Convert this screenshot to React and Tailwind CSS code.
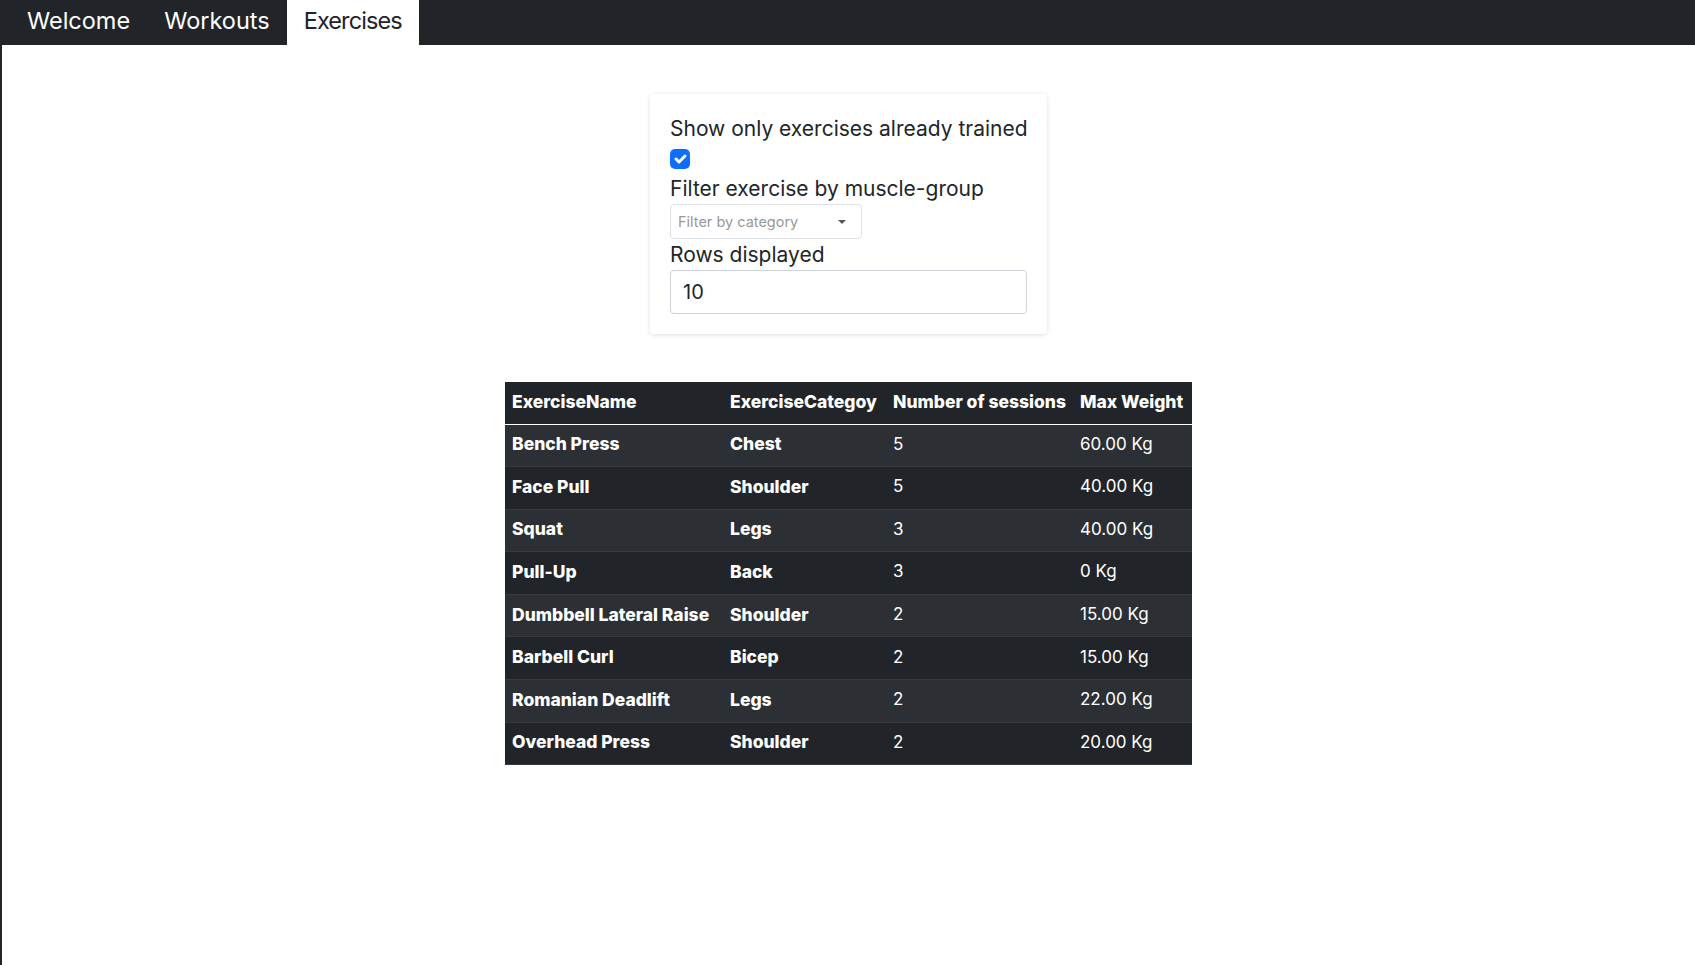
import { useState } from "react"

const rows = [
  { name: "Bench Press", category: "Chest", sessions: 5, weight: "60.00 Kg" },
  { name: "Face Pull", category: "Shoulder", sessions: 5, weight: "40.00 Kg" },
  { name: "Squat", category: "Legs", sessions: 3, weight: "40.00 Kg" },
  { name: "Pull-Up", category: "Back", sessions: 3, weight: "0 Kg" },
  { name: "Dumbbell Lateral Raise", category: "Shoulder", sessions: 2, weight: "15.00 Kg" },
  { name: "Barbell Curl", category: "Bicep", sessions: 2, weight: "15.00 Kg" },
  { name: "Romanian Deadlift", category: "Legs", sessions: 2, weight: "22.00 Kg" },
  { name: "Overhead Press", category: "Shoulder", sessions: 2, weight: "20.00 Kg" }
]

const tabs = ["Welcome", "Workouts", "Exercises"]

export default function App() {

  const [trained, setTrained] = useState(true)
  const [limit, setLimit] = useState("10")

  return (

    <div
      className="min-h-screen bg-white border-l-2 border-[#212529] text-[#212529]"
      style={{ fontFamily: "Inter, 'Noto Sans', sans-serif" }}
    >

      <nav className="flex h-[45px] bg-[#212529] pl-2">
        {tabs.map((tab) => (
          <div
            key={tab}
            className={
              tab === "Exercises"
                ? "px-[17px] leading-[41px] text-[23.5px] tracking-[-0.9px] bg-white text-[#212529]"
                : "px-[17px] leading-[41px] text-[23.5px] text-white"
            }
          >
            {tab}
          </div>
        ))}
      </nav>

      <div className="flex justify-center pt-[49px]">

        <div className="w-[397px] rounded bg-white p-5 shadow-[0_1px_5px_rgba(0,0,0,0.13)]">

          <div className="text-[21px] leading-[30px] whitespace-nowrap">
            Show only exercises already trained
          </div>

          <div className="h-[30px] pt-[5px]">
            <button
              onClick={() => setTrained(!trained)}
              className={
                trained
                  ? "flex h-5 w-5 items-center justify-center rounded-[5px] bg-[#0d6efd]"
                  : "flex h-5 w-5 items-center justify-center rounded-[5px] border border-[#ced4da] bg-white"
              }
            >
              {trained && (
                <svg viewBox="0 0 20 20" className="h-5 w-5">
                  <path
                    d="M6 10l3 3l6-6"
                    fill="none"
                    stroke="white"
                    strokeWidth="3"
                    strokeLinecap="round"
                    strokeLinejoin="round"
                  />
                </svg>
              )}
            </button>
          </div>

          <div className="text-[21px] leading-[30px]">
            Filter exercise by muscle-group
          </div>

          <div className="flex h-[35px] w-[192px] items-center justify-between rounded border border-[#dee2e6] pl-[7px] pr-[15px]">
            <span className="text-[14.5px] text-[#999]">Filter by category</span>
            <svg viewBox="0 0 8 4" className="h-[4px] w-[8px]">
              <path d="M0 0h8L4 4z" fill="#555" />
            </svg>
          </div>

          <div className="text-[21px] leading-[30px] mt-[1px]">
            Rows displayed
          </div>

          <input
            value={limit}
            onChange={(e) => setLimit(e.target.value)}
            className="h-[44px] w-full rounded border border-[#ced4da] px-3 text-[20px] text-[#212529] outline-none"
          />

        </div>

      </div>

      <div className="flex justify-center pt-[48px]">

        <table className="table-fixed w-[687px] border-collapse bg-[#212529] text-white text-[17px]">
          <colgroup>
            <col className="w-[218px]" />
            <col className="w-[163px]" />
            <col className="w-[187px]" />
            <col className="w-[119px]" />
          </colgroup>
          <thead>
            <tr className="h-[42px] border-b border-white">
              <th className="px-[7px] pb-[2px] text-left text-[17.5px] font-extrabold whitespace-nowrap">ExerciseName</th>
              <th className="px-[7px] pb-[2px] text-left text-[17.5px] font-extrabold whitespace-nowrap">ExerciseCategoy</th>
              <th className="px-[7px] pb-[2px] text-left text-[17.5px] font-extrabold whitespace-nowrap">Number of sessions</th>
              <th className="px-[7px] pb-[2px] text-left text-[17.5px] font-extrabold whitespace-nowrap">Max Weight</th>
            </tr>
          </thead>
          <tbody>
            {rows.map((row, i) => (
              <tr
                key={row.name}
                className={
                  i % 2 === 0
                    ? "h-[42.6px] bg-[#2c3034] border-b border-[#373b3e]"
                    : "h-[42.6px] bg-[#212529] border-b border-[#373b3e]"
                }
              >
                <td className="px-[7px] pb-[2px] text-[17.5px] font-extrabold whitespace-nowrap">{row.name}</td>
                <td className="px-[7px] pb-[2px] text-[17.5px] font-extrabold">{row.category}</td>
                <td className="px-[7px] pb-[2px]">{row.sessions}</td>
                <td className="px-[7px] pb-[2px]">{row.weight}</td>
              </tr>
            ))}
          </tbody>
        </table>

      </div>

    </div>

  )
}
